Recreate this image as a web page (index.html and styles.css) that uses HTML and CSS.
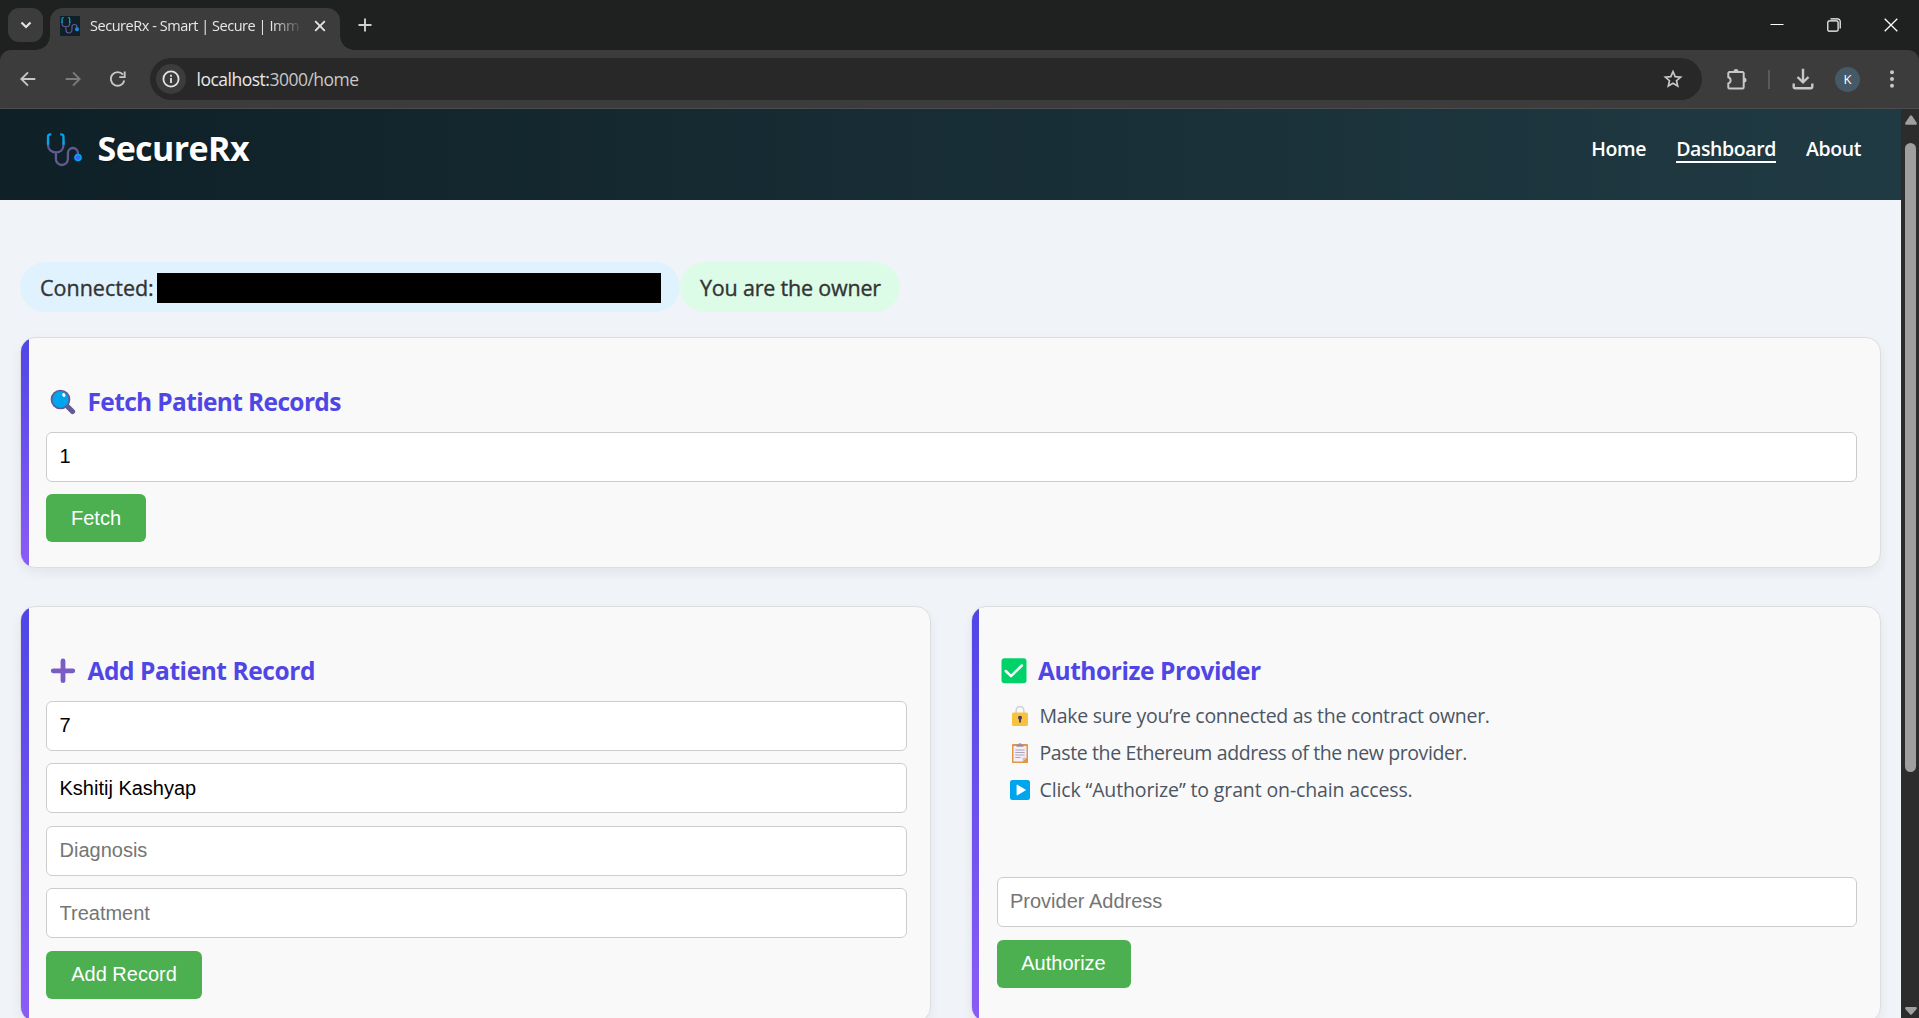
FILE: index.html
```html
<!DOCTYPE html>
<html lang="en">
<head>
<meta charset="utf-8">
<title>SecureRx - Smart | Secure | Immutable</title>
<link rel="stylesheet" href="styles.css">
</head>
<body>
<svg class="defs" width="0" height="0" aria-hidden="true">
  <symbol id="stethoscope" viewBox="0 0 36 36">
    <path d="M2 8v4c0 4.500 3.500 7.500 7.900 7.500S17.500 16.500 17.500 12V8M9.900 19.500v6.500a6 6 0 0 0 12 0v-6c0-2.800 2.300-5 5-5s5 2.200 5 5v3.500" fill="none" stroke="#635994" stroke-width="2.300"/>
    <path d="M5.300 1.300H4.500A2.500 2.500 0 0 0 2 3.800v8M14.200 1.300h.8a2.500 2.500 0 0 1 2.500 2.500v8" fill="none" stroke="#00a6ed" stroke-width="2.300"/>
    <circle cx="32" cy="24.500" r="3.800" fill="#00a6ed"/><circle cx="32" cy="24.500" r="2.200" fill="#3f5fff"/>
  </symbol>
</svg>
<div class="browser">
  <div class="tabstrip">
    <div class="tab-search"><svg width="14" height="14" viewBox="0 0 14 14"><path d="M2.500 4.500 7 9l4.500-4.500" fill="none" stroke="#e3e3e3" stroke-width="2.200"/></svg></div>
    <div class="tab">
      <span class="favicon"><svg width="18" height="18"><use href="#stethoscope"/></svg></span>
      <span class="tab-title">SecureRx - Smart | Secure | Imm</span>
      <svg class="tab-close" width="12" height="12" viewBox="0 0 12 12"><path d="M1.200 1.200l9.600 9.600M10.800 1.200l-9.600 9.600" stroke="#e3e3e3" stroke-width="1.900"/></svg>
    </div>
    <svg class="new-tab" width="14" height="14" viewBox="0 0 14 14"><path d="M7 .5v13M.5 7h13" stroke="#d0d0d0" stroke-width="1.900"/></svg>
    <div class="window-controls">
      <svg width="14" height="14" viewBox="0 0 14 14"><path d="M.5 6.500h13" stroke="#fff" stroke-width="1"/></svg>
      <svg width="14" height="14" viewBox="0 0 14 14"><rect x=".8" y="2.900" width="10.300" height="10.300" rx="1.500" fill="none" stroke="#fff" stroke-width="1.200"/><path d="M3.500.9h7.200a2.500 2.500 0 0 1 2.500 2.500v7.200" fill="none" stroke="#fff" stroke-width="1.200"/></svg>
      <svg width="14" height="14" viewBox="0 0 14 14"><path d="M.7.7l12.600 12.600M13.300.7.700 13.300" stroke="#fff" stroke-width="1.300"/></svg>
    </div>
  </div>
  <div class="toolbar">
    <svg class="nav-btn" width="16" height="16" viewBox="0 0 16 16"><path d="M15.300 8H1.500M8 1.300 1.300 8 8 14.700" fill="none" stroke="#c7c7c7" stroke-width="1.900"/></svg>
    <svg class="nav-btn" width="16" height="16" viewBox="0 0 16 16"><path d="M.7 8h13.800M8 1.300 14.700 8 8 14.700" fill="none" stroke="#7c7c7c" stroke-width="1.900"/></svg>
    <svg class="nav-btn reload" width="16" height="16" viewBox="0 0 16 16"><path d="M14.300 9.500A6.800 6.800 0 1 1 13 3.700" fill="none" stroke="#c7c7c7" stroke-width="1.900"/><path d="M14.700.5v5.600H9.300" fill="none" stroke="#c7c7c7" stroke-width="1.900"/></svg>
    <div class="omnibox">
      <span class="site-info"><svg width="18" height="18" viewBox="0 0 18 18"><circle cx="9" cy="9" r="7.600" fill="none" stroke="#e3e3e3" stroke-width="1.800"/><path d="M9 8v5M9 4.800v1.900" stroke="#e3e3e3" stroke-width="1.800"/></svg></span>
      <span class="url"><span class="host">localhost:</span>3000/home</span>
      <svg class="star" width="20" height="20" viewBox="0 0 20 20"><path d="M10 2.600l2.200 5 5.400.5-4.100 3.600 1.200 5.300L10 14.200 5.300 17l1.200-5.300-4.100-3.600 5.400-.5z" fill="none" stroke="#c7c7c7" stroke-width="1.700"/></svg>
    </div>
    <svg class="ext" width="22" height="22" viewBox="0 0 22 22"><path d="M3.500 4h13a1.200 1.200 0 0 1 1.200 1.200v14a1.200 1.200 0 0 1-1.200 1.200h-13a1.200 1.200 0 0 1-1.200-1.200v-3.700a3.300 3.300 0 0 0 0-6.300V5.200A1.200 1.200 0 0 1 3.500 4z" fill="none" stroke="#c7c7c7" stroke-width="2"/><path d="M7.500 3.500a2.500 2.500 0 0 1 5 0zM18 9.500a2.500 2.500 0 0 1 0 5z" fill="#c7c7c7"/></svg>
    <span class="divider"></span>
    <svg class="download" width="22" height="22" viewBox="0 0 22 22"><path d="M11 .8v13M5.500 9 11 14.300 16.500 9M1.700 15.500v3.300a1.500 1.500 0 0 0 1.500 1.500h15.600a1.500 1.500 0 0 0 1.500-1.500v-3.300" fill="none" stroke="#c7c7c7" stroke-width="2.400"/></svg>
    <span class="avatar">K</span>
    <svg class="menu" width="6" height="18" viewBox="0 0 6 18"><circle cx="3" cy="2.200" r="2" fill="#c7c7c7"/><circle cx="3" cy="9" r="2" fill="#c7c7c7"/><circle cx="3" cy="15.800" r="2" fill="#c7c7c7"/></svg>
  </div>
</div>
<div class="viewport">
  <div class="page">
    <header class="site-header">
      <div class="brand"><svg width="36" height="36"><use href="#stethoscope"/></svg><span class="brand-name">SecureRx</span></div>
      <nav class="site-nav"><a>Home</a><a class="active">Dashboard</a><a>About</a></nav>
    </header>
    <main class="content">
      <div class="badges">
        <div class="badge connected"><span>Connected:</span><span class="redacted"></span></div>
        <div class="badge owner"><span>You are the owner</span></div>
      </div>
      <section class="card fetch">
        <h2><svg width="26" height="26" viewBox="0 0 26 26"><path d="M17.500 17.500l5 5" stroke="#635994" stroke-width="5.200" stroke-linecap="round"/><circle cx="10.500" cy="10.500" r="9" fill="#00a6ed" stroke="#635994" stroke-width="1.700"/><ellipse cx="13.800" cy="6" rx="1.500" ry="2" fill="#fff" transform="rotate(-30 13.800 6)"/></svg><span class="h-fetch">Fetch Patient Records</span></h2>
        <input class="field" type="text" value="1">
        <button class="btn b-fetch">Fetch</button>
      </section>
      <div class="columns">
        <section class="card">
          <h2><svg width="26" height="26" viewBox="0 0 26 26"><path d="M13 2.900v19.800M3.200 12.800h19.600" stroke="#7a5cc4" stroke-width="4.800" stroke-linecap="round"/></svg><span>Add Patient Record</span></h2>
          <input class="field" type="text" value="7">
          <input class="field" type="text" value="Kshitij Kashyap">
          <input class="field" type="text" placeholder="Diagnosis">
          <input class="field" type="text" placeholder="Treatment">
          <button class="btn b-add">Add Record</button>
        </section>
        <section class="card narrow-bar">
          <h2><svg width="26" height="26" viewBox="0 0 26 26"><rect x=".5" y=".2" width="25" height="25" rx="3" fill="#00d26a"/><path d="M4.800 13l5.200 5.200L20.800 7.500" fill="none" stroke="#fff" stroke-width="2.500" stroke-linecap="round" stroke-linejoin="round"/></svg><span>Authorize Provider</span></h2>
          <ul class="steps">
            <li><svg width="20" height="20" viewBox="0 0 20 20"><path d="M6.200 7V4.200a3.800 3.800 0 0 1 7.600 0V7" fill="none" stroke="#d3d3d3" stroke-width="1.700"/><rect x="2" y="6.500" width="16" height="13.500" rx="1.500" fill="#f9c23c"/><circle cx="10" cy="11.800" r="2" fill="#433b6b"/><path d="M9.100 12h1.800v4.500H9.100z" fill="#433b6b"/></svg><span class="s1">Make sure you’re connected as the contract owner.</span></li>
            <li><svg width="20" height="20" viewBox="0 0 20 20"><rect x="2" y="1" width="16" height="19" rx=".8" fill="#e19747"/><path d="M3.500 3h13v11.500L12.500 18.500h-9z" fill="#f3eef8"/><path d="M12.500 18.500v-4h4z" fill="#cdc4d6"/><path d="M6.500 3.800V1.500h1.700A1.900 1.900 0 0 1 11.800 1.500h1.700v2.300z" fill="#998ea4"/><path d="M5.300 7h9.400M5.300 9.500h9.400M5.300 12h9.400M5.300 14.500h5.500" stroke="#a9a2b8"/></svg><span class="s2">Paste the Ethereum address of the new provider.</span></li>
            <li><svg width="20" height="20" viewBox="0 0 20 20"><rect width="20" height="20" rx="2.500" fill="#00a6ed"/><path d="M6.600 5.200v9.600c0 .5.400.7.800.5l8-4.800c.4-.2.400-.8 0-1l-8-4.800c-.4-.2-.8 0-.8.500z" fill="#fff"/></svg><span class="s3">Click “Authorize” to grant on-chain access.</span></li>
          </ul>
          <input class="field" type="text" placeholder="Provider Address">
          <button class="btn b-auth">Authorize</button>
        </section>
      </div>
    </main>
  </div>
  <div class="scrollbar">
    <svg width="12" height="10" viewBox="0 0 12 10"><path d="M5 .8q1-1.300 2 0l4.700 7q.6 2-1 2H1.300q-1.600 0-1-2z" fill="#9f9f9f"/></svg>
    <div class="thumb"></div>
    <svg class="down" width="12" height="8" viewBox="0 0 12 8"><path d="M5 7.200q1 1.300 2 0l4.700-5.200q.6-2-1-2H1.300q-1.600 0-1 2z" fill="#9f9f9f"/></svg>
  </div>
</div>
</body>
</html>
```
FILE: styles.css
```css
* { box-sizing: border-box; }
body {
  margin: 0;
  width: 1919px;
  height: 1018px;
  overflow: hidden;
  display: flex;
  flex-direction: column;
  font-family: "Open Sans", "Noto Sans", sans-serif;
}
svg { display: block; flex: none; }
.defs { position: absolute; }

/* Browser frame */
.browser { flex: none; background: #1f2120; }
.tabstrip { height: 50px; display: flex; align-items: center; padding-left: 8px; }
.tab-search {
  width: 35px; height: 34px; border-radius: 11px; background: #3c3c3c;
  display: flex; align-items: center; justify-content: center;
}
.tab {
  position: relative;
  align-self: flex-end;
  width: 290px; height: 42px; margin-left: 7px;
  border-radius: 13px 13px 0 0; background: #3c3c3c;
  display: flex; align-items: center; padding: 0 14px 7px 10px;
}
.tab::before, .tab::after {
  content: ""; position: absolute; bottom: 0; width: 14px; height: 14px;
}
.tab::before { left: -14px; background: radial-gradient(circle at 0 0, transparent 13.5px, #3c3c3c 14px); }
.tab::after { right: -14px; background: radial-gradient(circle at 100% 0, transparent 13.5px, #3c3c3c 14px); }
.favicon {
  width: 20px; height: 20px; background: #0f2027; flex: none;
  display: flex; align-items: center; justify-content: center;
}
.tab-title {
  margin: 0 0 0 10px; width: 214px; white-space: nowrap;
  font-size: 14.5px; letter-spacing: -0.46px; color: #e8e8e8; line-height: 20px;
  -webkit-mask-image: linear-gradient(90deg, #000 182px, transparent 213px);
  mask-image: linear-gradient(90deg, #000 182px, transparent 213px);
}
.tab-close { margin-left: auto; }
.new-tab { margin-left: 18px; }
.window-controls { margin-left: auto; display: flex; gap: 43px; padding-right: 21px; }
.toolbar {
  height: 59px; background: #3c3c3c; border-bottom: 1px solid #4d4d4d;
  border-radius: 11px 11px 0 0;
  display: flex; align-items: center; padding: 0 24px 0 20px;
}
.nav-btn { margin-right: 29px; }
.reload { margin-right: 24px; }
.omnibox {
  width: 1552px; height: 42px; border-radius: 21px; background: #282828;
  display: flex; align-items: center; padding: 0 19.5px 0 6px;
}
.site-info {
  width: 30px; height: 30px; border-radius: 50%; background: #3c3c3c;
  display: flex; align-items: center; justify-content: center;
}
.url { margin-left: 10.5px; font-size: 17.5px; letter-spacing: -0.5px; color: #c7c7c7; }
.host { color: #e8e8e8; }
.star { margin-left: auto; }
.ext { margin-left: 24px; }
.divider { width: 2px; height: 19px; background: #5a5a5a; margin-left: 20px; }
.download { margin-left: 22px; }
.avatar {
  width: 25px; height: 25px; border-radius: 50%; background: #455a66; color: #fff;
  font-size: 13px; line-height: 25px; text-align: center; margin-left: 21px;
}
.menu { margin-left: auto; }

/* Viewport */
.viewport { flex: 1; min-height: 0; display: flex; }
.page { width: 1901px; background: #f0f4f8; overflow: hidden; }
.scrollbar {
  width: 18px; background: #2c2c2c;
  display: flex; flex-direction: column; align-items: center; padding: 6px 0 3px 1px;
}
.thumb { width: 11px; height: 629px; margin-top: 18px; border-radius: 6px; background: #9f9f9f; }
.down { margin-top: auto; }

.site-header {
  height: 91px; padding: 0 40px 11px 46px;
  background: linear-gradient(90deg, #0f2027, #203a43);
  display: flex; align-items: center; justify-content: space-between;
}
.brand { display: flex; align-items: center; gap: 15.5px; }
.brand svg { margin-top: 3px; }
.brand-name {
  font-size: 34px; font-weight: 700; letter-spacing: -0.6px; color: #fff;
  line-height: 34px; margin-top: -2px; text-shadow: 1px 1px 2px rgba(0,0,0,.3);
}
.site-nav { display: flex; gap: 30px; font-size: 19.5px; font-weight: 600; letter-spacing: -0.4px; color: #fff; line-height: 25px; }
.site-nav a { border-bottom: 2px solid transparent; }
.site-nav .active { border-color: #fff; }

.content { padding: 62px 20px 0; }
.badges { display: flex; }
.badge {
  height: 50px; border-radius: 25px; padding: 0 20px; white-space: nowrap;
  display: flex; align-items: center; font-size: 21.5px; color: #333;
  -webkit-text-stroke: 0.35px #333;
}
.connected { width: 660px; background: #e0f2fe; justify-content: space-between; }
.owner { width: 220px; background: #dcfce7; letter-spacing: -0.2px; }
.redacted { width: 504px; height: 30px; background: #000; margin: 2px -1px 0 0; }

.card {
  position: relative; overflow: hidden;
  border: 1px solid #ddd; border-radius: 15px; background: #f9f9f9;
  padding: 49px 23px 24px 25px;
  box-shadow: 0 5px 12px rgba(0,0,0,.06);
}
.card::before {
  content: ""; position: absolute; left: 0; top: 0; bottom: 0; width: 8px;
  background: linear-gradient(#4f46e5, #8b5cf6);
}
.narrow-bar::before { width: 7px; }
.fetch { margin: 25px 0 0; height: 231px; }
.columns { display: grid; grid-template-columns: 1fr 1fr; gap: 40px; margin-top: 38px; }
.columns .card { height: 416px; }
.card h2 {
  margin: 0 0 12.75px 4px; height: 32px; display: flex; align-items: center; gap: 11.5px;
  font-size: 24.5px; font-weight: 700; letter-spacing: -0.43px; color: #4f46e5; line-height: 32px; white-space: nowrap;
}
.card h2 svg { margin-top: -2px; }
.card h2 span { margin-top: -3px; }
.card h2 .h-fetch { letter-spacing: -0.64px; }
.field {
  display: block; width: 100%; height: 50px; margin: 0 0 12.5px; padding: 0 12.5px 0.5px;
  border: 1px solid #ccc; border-radius: 6px; background: #fff; color: #000;
  font: 20px "Liberation Sans", Arial, sans-serif;
}
.field::placeholder { color: #757575; opacity: 1; }
.btn {
  display: block; height: 48px; padding: 0; border: 0; border-radius: 6px;
  background: #4caf50; color: #fff; font: 20px "Liberation Sans", Arial, sans-serif;
}
.b-fetch { width: 100px; }
.b-add { width: 156px; padding-bottom: 1px; }
.b-auth { width: 134px; padding-bottom: 1px; }
.steps { list-style: none; margin: -3.5px 0 68.75px 13px; padding: 0; }
.steps li {
  height: 37px; display: flex; align-items: center; gap: 10px;
  font-size: 19.5px; color: #4b5563; white-space: nowrap;
}
.s1 { letter-spacing: -0.28px; }
.s2 { letter-spacing: -0.38px; }
.s3 { letter-spacing: -0.13px; }
```
